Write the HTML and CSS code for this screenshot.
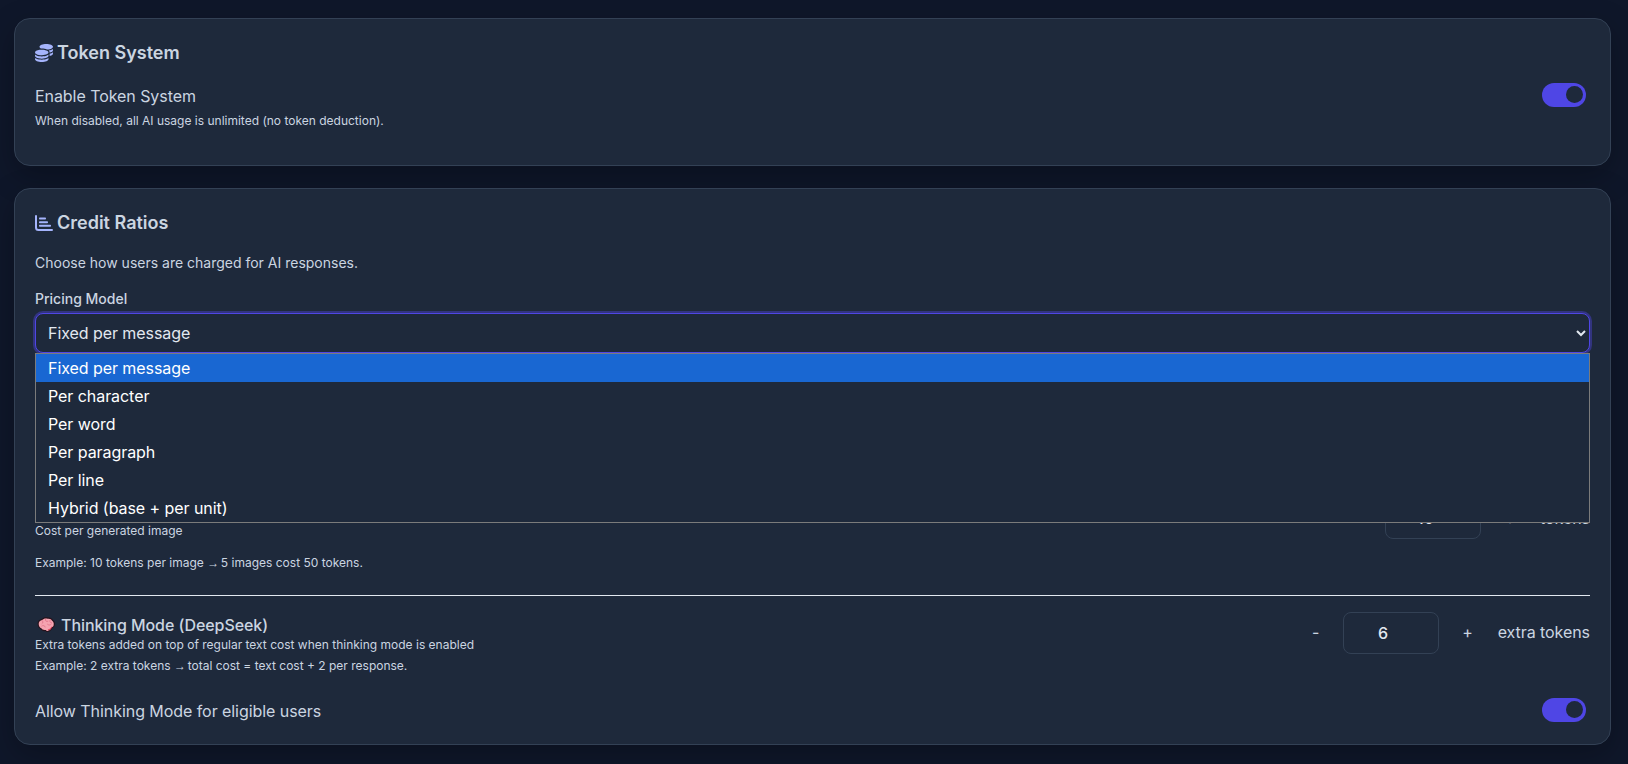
FILE: index.html
```html
<!DOCTYPE html>
<html lang="en">
<head>
<meta charset="utf-8">
<title>Token settings</title>
<link rel="stylesheet" href="styles.css">
</head>
<body>
<main class="page">
  <section class="card">
    <h2 class="card-title">
      <svg class="title-icon" viewBox="0 0 512 512"><path d="M512 80c0 18-14.3 34.6-38.4 48c-29.1 16.1-72.5 27.5-122.3 30.9c-3.7-1.8-7.4-3.5-11.3-5C300.6 137.4 248.2 128 192 128c-8.3 0-16.4 .2-24.5 .6l-1.1-.6C142.3 114.6 128 98 128 80c0-44.2 86-80 192-80S512 35.8 512 80zM160.7 161.1c10.2-.7 20.7-1.1 31.3-1.1c62.2 0 117.4 12.3 152.5 31.4C369.3 204.9 384 221.7 384 240c0 4-.7 7.9-2.1 11.7c-4.6 13.2-17 25.3-35 35.5c0 0 0 0 0 0c-.1 .1-.3 .1-.4 .2l0 0 0 0c-.3 .2-.6 .3-.9 .5c-35 19.4-90.8 32-153.6 32c-59.6 0-112.9-11.3-148.2-29.1c-1.9-.9-3.7-1.9-5.5-2.9C14.3 274.6 0 258 0 240c0-34.8 53.4-64.5 128-75.4c10.5-1.5 21.4-2.7 32.7-3.5zM416 240c0-21.9-10.6-39.9-24.1-53.4c28.3-4.4 54.2-11.4 76.2-20.5c16.3-6.8 31.5-15.2 43.9-25.5V176c0 19.3-16.5 37.1-43.8 50.9c-14.6 7.4-32.4 13.7-52.4 18.5c.1-1.8 .2-3.5 .2-5.3zm-32 96c0 18-14.3 34.6-38.4 48c-1.8 1-3.6 1.9-5.5 2.9C304.9 404.7 251.6 416 192 416c-62.8 0-118.6-12.6-153.6-32C14.3 370.6 0 354 0 336V300.6c12.5 10.3 27.6 18.7 43.9 25.5C83.4 342.6 135.8 352 192 352s108.6-9.4 148.1-25.9c7.8-3.2 15.3-6.9 22.4-10.9c6.1-3.4 11.8-7.2 17.2-11.2c1.5-1.1 2.9-2.3 4.3-3.4V304v5.7V336zm32 0V304 278.1c19-4.2 36.5-9.5 52.1-16c16.3-6.8 31.5-15.2 43.9-25.5V272c0 10.5-5 21-14.9 30.9c-16.3 16.3-45 29.7-81.3 38.4c.1-1.7 .2-3.5 .2-5.3zM192 448c56.2 0 108.6-9.4 148.1-25.9c16.3-6.8 31.5-15.2 43.9-25.5V432c0 44.2-86 80-192 80S0 476.2 0 432V396.6c12.5 10.3 27.6 18.7 43.9 25.5C83.4 438.6 135.8 448 192 448z"/></svg>
      Token System
    </h2>
    <div class="switch-row">
      <div>
        <div class="label">Enable Token System</div>
        <p class="hint">When disabled, all AI usage is unlimited (no token deduction).</p>
      </div>
      <span class="toggle"><span class="knob"></span></span>
    </div>
  </section>

  <section class="card">
    <h2 class="card-title title-tight">
      <svg class="title-icon" viewBox="0 0 18 16"><path d="M0 1a1 1 0 0 1 2 0v11.500a1.500 1.500 0 0 0 1.500 1.500H17a1 1 0 0 1 0 2H3.500A3.500 3.500 0 0 1 0 12.500z"/><rect x="4" y="2.600" width="7" height="2" rx=".8"/><rect x="4" y="6.200" width="9" height="2" rx=".8"/><rect x="4" y="9.800" width="12" height="2" rx=".8"/></svg>
      Credit Ratios
    </h2>
    <p class="intro">Choose how users are charged for AI responses.</p>
    <label class="field-label" for="pricing">Pricing Model</label>
    <div class="select-wrap">
      <select id="pricing" class="select">
        <option>Fixed per message</option>
      </select>
      <ul class="dropdown">
        <li class="option is-active">Fixed per message</li>
        <li class="option">Per character</li>
        <li class="option">Per word</li>
        <li class="option">Per paragraph</li>
        <li class="option">Per line</li>
        <li class="option">Hybrid (base + per unit)</li>
      </ul>
    </div>

    <div class="rate rate-image">
      <div class="rate-text rate-text-image">
        <p class="hint">Cost per generated image</p>
      </div>
      <div class="stepper">
        <button class="step">-</button>
        <input class="amount amount-image" type="number" value="10" aria-label="Tokens per image">
        <button class="step">+</button>
        <span class="unit">tokens</span>
      </div>
    </div>
    <p class="hint example example-image">Example: 10 tokens per image <span class="arrow">→</span> 5 images cost 50 tokens.</p>
    <hr class="divider">

    <div class="rate">
      <div class="rate-text">
        <div class="rate-title">
          <svg class="brain" viewBox="0 0 18 15"><path fill="#26121b" d="M.6 6.800C.4 4.300 2.400 2.200 4.700 2 6.100.3 9 -.3 10.900.6c2-.5 4.400.5 5.100 2.300 1.500 1 2.200 2.800 1.800 4.500.2 1.700-1 3.200-2.500 3.700-.4 1.700-1.900 3.400-3.600 3.500-1.200 1-2.600.6-3.300-.5-2 .3-4.100-.5-4.900-2C2 11.600.6 9.300.6 6.800z"/><path fill="#f5a3b0" d="M1.700 6.900C1.600 5 3.200 3.300 5.200 3 6.400 1.500 8.800 1 10.700 1.800c1.800-.5 3.700.3 4.400 1.900 1.300.8 1.900 2.300 1.600 3.700.2 1.500-.9 2.700-2.300 3-.4 1.500-1.600 2.800-3 3-1 .9-2 .6-2.600-.5-1.900.4-3.700-.2-4.400-1.600C2.900 10.900 1.700 9 1.700 6.900z"/><path fill="none" stroke="#e0758a" stroke-width=".9" stroke-linecap="round" d="M5.200 3.600c1 .9 1 2.300-.2 3.100M8.500 2.300c-.6 1.600.9 2.600 2.400 2M13.200 3c-.9 1.300-.3 2.800 1.300 2.900M4.800 9c1.300-1 3.100-.5 3.400 1M10.500 7.300c1 1.100 2.700 1 3.600 0"/><path fill="#e2405a" d="M10.700 12.500c1.500-.1 2.900-1.100 3.600-2.800l1 .1c-.5 1.900-2.300 3.400-4 3.500z"/></svg>
          Thinking Mode (DeepSeek)
        </div>
        <p class="hint">Extra tokens added on top of regular text cost when thinking mode is enabled</p>
      </div>
      <div class="stepper">
        <button class="step">-</button>
        <input class="amount" type="number" value="6" aria-label="Extra tokens">
        <button class="step">+</button>
        <span class="unit">extra tokens</span>
      </div>
    </div>
    <p class="hint example">Example: 2 extra tokens <span class="arrow">→</span> total cost = text cost + 2 per response.</p>

    <div class="allow-row">
      <div class="label">Allow Thinking Mode for eligible users</div>
      <span class="toggle"><span class="knob"></span></span>
    </div>
  </section>
</main>
</body>
</html>
```

FILE: styles.css
```css
* { box-sizing: border-box; }

html, body { margin: 0; height: 100%; }

body {
  background: #0f172a;
  color: #cbd5e1;
  font-family: Inter, "Noto Sans", sans-serif;
  font-size: 16px;
  line-height: 1.6;
  overflow: hidden;
}

.page {
  display: flex;
  flex-direction: column;
  gap: 22px;
  padding: 18px 17px 20px 14px;
}

.card {
  background: #1e293b;
  border: 1px solid #334155;
  border-radius: 16px;
  padding: 20px;
  box-shadow: 0 10px 30px rgba(0, 0, 0, .25);
}

.card-title {
  display: flex;
  align-items: center;
  gap: 4px;
  margin: 0 0 16px;
  font-size: 18px;
  font-weight: 600;
  color: #cbd5e1;
}

.title-tight { margin-bottom: 14px; }

.title-icon {
  width: 18px;
  height: 18px;
  fill: #a5b4fc;
  flex: none;
}

.switch-row {
  display: flex;
  justify-content: space-between;
  align-items: flex-start;
  padding-bottom: 14.6px;
}

.label {
  color: #cbd5e1;
  letter-spacing: -0.06px;
}

.hint {
  margin: 2px 0 0;
  font-size: 12px;
  line-height: 19px;
  color: #cbd5e1;
}

.arrow {
  font-family: "Liberation Sans", sans-serif;
  letter-spacing: -1.7px;
}

.toggle {
  display: flex;
  justify-content: flex-end;
  align-items: center;
  width: 44px;
  height: 24px;
  margin: -1px 4px 0 0;
  padding-right: 3px;
  border-radius: 12px;
  background: #4f46e5;
  flex: none;
}

.knob {
  width: 17px;
  height: 17px;
  border-radius: 50%;
  background: #1e293b;
}

.intro {
  margin: 0 0 14px;
  font-size: 14px;
  color: #cbd5e1;
}

.field-label {
  display: block;
  margin-bottom: 2px;
  font-size: 14px;
  font-weight: 500;
  color: #cbd5e1;
}

.select-wrap { position: relative; }

.select {
  display: block;
  width: 100%;
  height: 40px;
  padding: 0 8px;
  background: #1e293b;
  color: #e2e8f0;
  border: 1px solid #4f46e5;
  border-radius: 8px;
  box-shadow: 0 0 0 2px rgba(79, 70, 229, .4);
  color-scheme: dark;
  font: inherit;
  font-size: 16px;
  letter-spacing: -0.06px;
  outline: none;
}

.dropdown {
  position: absolute;
  top: 100%;
  left: 0;
  right: 0;
  margin: 0;
  padding: 0;
  list-style: none;
  background: #1e293b;
  border: 1px solid #7b7b7b;
  z-index: 2;
}

.option {
  height: 28px;
  padding: 0 12px;
  color: #fff;
  font-size: 16px;
  line-height: 28px;
  letter-spacing: -0.06px;
}

.is-active { background: #1967d2; }

.rate {
  display: flex;
  justify-content: space-between;
  align-items: flex-start;
}

.rate-image { margin-top: 145.4px; }

.rate-text { padding-top: 3px; }

.rate-text-image { padding-top: 23px; }

.rate-title {
  display: flex;
  align-items: center;
  gap: 6px;
  font-weight: 500;
  letter-spacing: -0.06px;
  line-height: 20px;
  color: #cbd5e1;
}

.rate .hint { margin: 0; }

.brain {
  width: 18px;
  height: 15px;
  margin-left: 2px;
  flex: none;
}

.stepper {
  display: flex;
  align-items: center;
  gap: 16px;
}

.step {
  width: 24px;
  padding: 0;
  border: 0;
  background: none;
  color: #cbd5e1;
  font: inherit;
}

.amount {
  width: 96px;
  height: 42px;
  margin: 0 1px 0 -1px;
  background: #1e293b;
  color: #e2e8f0;
  border: 1px solid #334155;
  border-radius: 8px;
  font: inherit;
  font-weight: 500;
  text-align: center;
  outline: none;
  color-scheme: dark;
}

.amount-image { height: 41px; }

.unit {
  margin-left: 2px;
  color: #cbd5e1;
  letter-spacing: -0.06px;
}

.example { margin-top: 2px; }

.example-image { margin-top: 13px; }

.divider {
  height: 1px;
  margin: 22px 0 16px;
  border: 0;
  background: #e2e8f0;
}

.allow-row {
  display: flex;
  justify-content: space-between;
  align-items: flex-start;
  height: 25px;
  margin-top: 23px;
}
```
